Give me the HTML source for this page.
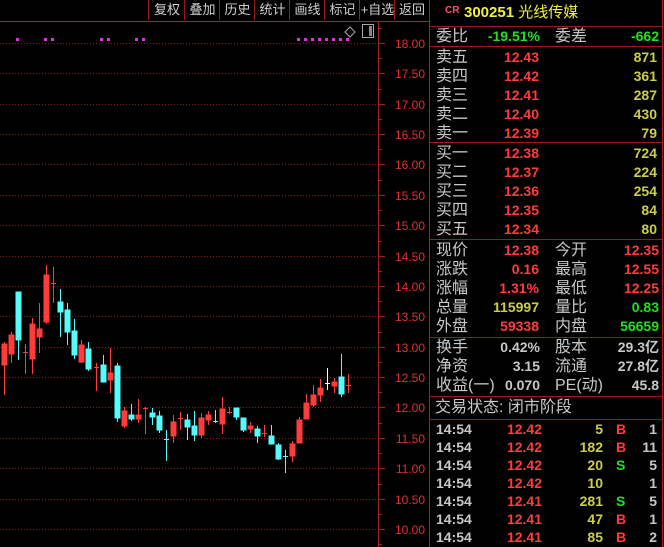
<!DOCTYPE html>
<html><head><meta charset="utf-8"><style>
*{margin:0;padding:0}
body{width:664px;height:547px;background:#000;overflow:hidden;position:relative;font-family:"Liberation Sans","Noto Sans CJK SC",sans-serif}
.t{position:absolute;font-size:14px;line-height:19px;white-space:nowrap}
.l{color:#c8c8c8;font-size:16px}.r{color:#ff3c3c}.y{color:#cccc50}.g{color:#20e020}.w{color:#c8c8c8}
.n{font-weight:bold;font-size:14px}
.hl{position:absolute;left:430px;width:232px;height:1px;background:#a01818}
.btn{position:absolute;top:0;height:20px;border-left:1px solid #a01818;color:#d0d0d0;font-size:13px;line-height:20px;text-align:center}
</style></head><body>
<svg width="664" height="547" style="position:absolute;left:0;top:0">
<line x1="0" y1="21.5" x2="429" y2="21.5" stroke="#b01c1c"/>
<line x1="378.5" y1="22" x2="378.5" y2="547" stroke="#b01c1c"/>
<line x1="429.5" y1="0" x2="429.5" y2="547" stroke="#b01c1c"/>
<line x1="662.5" y1="0" x2="662.5" y2="547" stroke="#b01c1c"/>
<g stroke="#8a1a1a" stroke-dasharray="1,2">
<line x1="0" y1="43.5" x2="378" y2="43.5"/><line x1="0" y1="73.5" x2="378" y2="73.5"/><line x1="0" y1="104.5" x2="378" y2="104.5"/><line x1="0" y1="134.5" x2="378" y2="134.5"/><line x1="0" y1="164.5" x2="378" y2="164.5"/><line x1="0" y1="195.5" x2="378" y2="195.5"/><line x1="0" y1="225.5" x2="378" y2="225.5"/><line x1="0" y1="256.5" x2="378" y2="256.5"/><line x1="0" y1="286.5" x2="378" y2="286.5"/><line x1="0" y1="316.5" x2="378" y2="316.5"/><line x1="0" y1="347.5" x2="378" y2="347.5"/><line x1="0" y1="377.5" x2="378" y2="377.5"/><line x1="0" y1="407.5" x2="378" y2="407.5"/><line x1="0" y1="438.5" x2="378" y2="438.5"/><line x1="0" y1="468.5" x2="378" y2="468.5"/><line x1="0" y1="499.5" x2="378" y2="499.5"/><line x1="0" y1="529.5" x2="378" y2="529.5"/>
</g>
<g stroke="#b01c1c">
<line x1="379" y1="43.5" x2="385" y2="43.5"/><line x1="379" y1="73.5" x2="385" y2="73.5"/><line x1="379" y1="104.5" x2="385" y2="104.5"/><line x1="379" y1="134.5" x2="385" y2="134.5"/><line x1="379" y1="164.5" x2="385" y2="164.5"/><line x1="379" y1="195.5" x2="385" y2="195.5"/><line x1="379" y1="225.5" x2="385" y2="225.5"/><line x1="379" y1="256.5" x2="385" y2="256.5"/><line x1="379" y1="286.5" x2="385" y2="286.5"/><line x1="379" y1="316.5" x2="385" y2="316.5"/><line x1="379" y1="347.5" x2="385" y2="347.5"/><line x1="379" y1="377.5" x2="385" y2="377.5"/><line x1="379" y1="407.5" x2="385" y2="407.5"/><line x1="379" y1="438.5" x2="385" y2="438.5"/><line x1="379" y1="468.5" x2="385" y2="468.5"/><line x1="379" y1="499.5" x2="385" y2="499.5"/><line x1="379" y1="529.5" x2="385" y2="529.5"/>
<line x1="379" y1="28.5" x2="382" y2="28.5"/><line x1="379" y1="58.5" x2="382" y2="58.5"/><line x1="379" y1="89.5" x2="382" y2="89.5"/><line x1="379" y1="119.5" x2="382" y2="119.5"/><line x1="379" y1="149.5" x2="382" y2="149.5"/><line x1="379" y1="180.5" x2="382" y2="180.5"/><line x1="379" y1="210.5" x2="382" y2="210.5"/><line x1="379" y1="241.5" x2="382" y2="241.5"/><line x1="379" y1="271.5" x2="382" y2="271.5"/><line x1="379" y1="301.5" x2="382" y2="301.5"/><line x1="379" y1="332.5" x2="382" y2="332.5"/><line x1="379" y1="362.5" x2="382" y2="362.5"/><line x1="379" y1="392.5" x2="382" y2="392.5"/><line x1="379" y1="423.5" x2="382" y2="423.5"/><line x1="379" y1="453.5" x2="382" y2="453.5"/><line x1="379" y1="484.5" x2="382" y2="484.5"/><line x1="379" y1="514.5" x2="382" y2="514.5"/><line x1="379" y1="544.5" x2="382" y2="544.5"/>
</g>
<g fill="#e03030" font-family="Liberation Sans" font-size="12" text-anchor="end">
<text x="425" y="48">18.00</text><text x="425" y="78">17.50</text><text x="425" y="109">17.00</text><text x="425" y="139">16.50</text><text x="425" y="169">16.00</text><text x="425" y="200">15.50</text><text x="425" y="230">15.00</text><text x="425" y="261">14.50</text><text x="425" y="291">14.00</text><text x="425" y="321">13.50</text><text x="425" y="352">13.00</text><text x="425" y="382">12.50</text><text x="425" y="412">12.00</text><text x="425" y="443">11.50</text><text x="425" y="473">11.00</text><text x="425" y="504">10.50</text><text x="425" y="534">10.00</text>
</g>
<g fill="#e030e0">
<rect x="16" y="38" width="3" height="3"/><rect x="44" y="38" width="3" height="3"/><rect x="51" y="38" width="3" height="3"/><rect x="100" y="38" width="3" height="3"/><rect x="107" y="38" width="3" height="3"/><rect x="135" y="38" width="3" height="3"/><rect x="142" y="38" width="3" height="3"/>
<rect x="297" y="38" width="3" height="3"/><rect x="304" y="38" width="3" height="3"/><rect x="311" y="38" width="3" height="3"/><rect x="318" y="38" width="3" height="3"/><rect x="325" y="38" width="3" height="3"/><rect x="332" y="38" width="3" height="3"/><rect x="339" y="38" width="3" height="3"/><rect x="346" y="38" width="3" height="3"/>
</g>
<path d="M350 27 L355 32 L350 37 L345 32 Z" fill="none" stroke="#aaa"/>
<rect x="362.5" y="24.5" width="11" height="13" fill="none" stroke="#aaa"/><rect x="369" y="26" width="3" height="10" fill="#888"/>
<g stroke="#ff3c3c" fill="#ff3c3c">
<line x1="4.5" y1="342" x2="4.5" y2="395"/><rect x="2" y="344" width="5" height="21"/>
<line x1="11.5" y1="332" x2="11.5" y2="363"/><rect x="9" y="335" width="5" height="19"/>
<line x1="25.5" y1="344" x2="25.5" y2="374"/><line x1="23" y1="352.5" x2="28" y2="352.5"/>
<line x1="32.5" y1="318" x2="32.5" y2="374"/><rect x="30" y="324" width="5" height="35"/>
<line x1="39.5" y1="303" x2="39.5" y2="353"/><rect x="37" y="329" width="5" height="8"/>
<line x1="46.5" y1="265" x2="46.5" y2="324"/><rect x="44" y="275" width="5" height="47"/>
<line x1="53.5" y1="267" x2="53.5" y2="303"/><line x1="51" y1="283.5" x2="56" y2="283.5"/>
<line x1="81.5" y1="340" x2="81.5" y2="363"/><rect x="79" y="345" width="5" height="17"/>
<line x1="96.5" y1="363" x2="96.5" y2="391"/><line x1="94" y1="367.5" x2="99" y2="367.5"/>
<line x1="110.5" y1="348" x2="110.5" y2="393"/><rect x="108" y="373" width="5" height="7"/>
<line x1="124.5" y1="407" x2="124.5" y2="428"/><rect x="122" y="411" width="5" height="15"/>
<line x1="138.5" y1="399" x2="138.5" y2="423"/><rect x="136" y="415" width="5" height="4"/>
<line x1="145.5" y1="407" x2="145.5" y2="434"/><line x1="143" y1="408.5" x2="148" y2="408.5"/>
<line x1="173.5" y1="415" x2="173.5" y2="443"/><rect x="171" y="422" width="5" height="14"/>
<line x1="180.5" y1="412" x2="180.5" y2="430"/><line x1="178" y1="418.5" x2="183" y2="418.5"/>
<line x1="201.5" y1="413" x2="201.5" y2="438"/><rect x="199" y="418" width="5" height="17"/>
<line x1="208.5" y1="411" x2="208.5" y2="425"/><rect x="206" y="415" width="5" height="5"/>
<line x1="222.5" y1="397" x2="222.5" y2="434"/><rect x="220" y="409" width="5" height="15"/>
<line x1="229.5" y1="407" x2="229.5" y2="414"/><line x1="227" y1="412.5" x2="232" y2="412.5"/>
<line x1="250.5" y1="422" x2="250.5" y2="433"/><rect x="248" y="426" width="5" height="3"/>
<line x1="264.5" y1="425" x2="264.5" y2="437"/><line x1="262" y1="433.5" x2="267" y2="433.5"/>
<line x1="292.5" y1="441" x2="292.5" y2="462"/><rect x="290" y="444" width="5" height="12"/>
<line x1="299.5" y1="417" x2="299.5" y2="443"/><rect x="297" y="420" width="5" height="23"/>
<line x1="306.5" y1="394" x2="306.5" y2="419"/><rect x="304" y="403" width="5" height="16"/>
<line x1="313.5" y1="385" x2="313.5" y2="407"/><rect x="311" y="395" width="5" height="10"/>
<line x1="320.5" y1="379" x2="320.5" y2="402"/><rect x="318" y="388" width="5" height="7"/>
<line x1="334.5" y1="378" x2="334.5" y2="393"/><rect x="332" y="382" width="5" height="4"/>
<line x1="348.5" y1="374" x2="348.5" y2="393"/><line x1="346" y1="385.5" x2="351" y2="385.5"/>
</g>
<g stroke="#54fcfc" fill="#54fcfc">
<line x1="18.5" y1="292" x2="18.5" y2="360"/><rect x="16" y="292" width="5" height="48"/>
<line x1="60.5" y1="289" x2="60.5" y2="337"/><rect x="58" y="302" width="5" height="10"/>
<line x1="67.5" y1="303" x2="67.5" y2="345"/><rect x="65" y="310" width="5" height="22"/>
<line x1="74.5" y1="319" x2="74.5" y2="359"/><rect x="72" y="331" width="5" height="24"/>
<line x1="88.5" y1="342" x2="88.5" y2="371"/><rect x="86" y="349" width="5" height="20"/>
<line x1="103.5" y1="355" x2="103.5" y2="382"/><rect x="101" y="365" width="5" height="17"/>
<line x1="117.5" y1="363" x2="117.5" y2="422"/><rect x="115" y="366" width="5" height="52"/>
<line x1="131.5" y1="404" x2="131.5" y2="421"/><rect x="129" y="415" width="5" height="4"/>
<line x1="152.5" y1="408" x2="152.5" y2="425"/><rect x="150" y="413" width="5" height="4"/>
<line x1="159.5" y1="411" x2="159.5" y2="433"/><rect x="157" y="416" width="5" height="14"/>
<line x1="166.5" y1="430" x2="166.5" y2="461"/><line x1="164" y1="439.5" x2="169" y2="439.5"/>
<line x1="187.5" y1="414" x2="187.5" y2="440"/><rect x="185" y="420" width="5" height="7"/>
<line x1="194.5" y1="411" x2="194.5" y2="441"/><rect x="192" y="426" width="5" height="9"/>
<line x1="215.5" y1="410" x2="215.5" y2="423"/><line x1="213" y1="421.5" x2="218" y2="421.5"/>
<line x1="236.5" y1="408" x2="236.5" y2="420"/><rect x="234" y="408" width="5" height="9"/>
<line x1="243.5" y1="418" x2="243.5" y2="432"/><rect x="241" y="418" width="5" height="12"/>
<line x1="257.5" y1="426" x2="257.5" y2="443"/><rect x="255" y="429" width="5" height="7"/>
<line x1="271.5" y1="425" x2="271.5" y2="444"/><rect x="269" y="436" width="5" height="8"/>
<line x1="278.5" y1="443" x2="278.5" y2="460"/><rect x="276" y="445" width="5" height="14"/>
<line x1="285.5" y1="450" x2="285.5" y2="473"/><line x1="283" y1="456.5" x2="288" y2="456.5"/>
<line x1="341.5" y1="354" x2="341.5" y2="397"/><rect x="339" y="377" width="5" height="17"/>
</g>
<g stroke="#fff"><line x1="327.5" y1="368" x2="327.5" y2="390"/><line x1="325" y1="383.5" x2="330" y2="383.5"/></g>
</svg>
<div class="btn" style="left:148px;width:36px">复权</div>
<div class="btn" style="left:184px;width:35px">叠加</div>
<div class="btn" style="left:219px;width:35px">历史</div>
<div class="btn" style="left:254px;width:35px">统计</div>
<div class="btn" style="left:289px;width:35px">画线</div>
<div class="btn" style="left:324px;width:35px">标记</div>
<div class="btn" style="left:359px;width:35px">+自选</div>
<div class="btn" style="left:394px;width:34px">返回</div>

<div class="hl" style="top:26px"></div>
<div class="hl" style="top:46px"></div>
<div class="hl" style="top:142px"></div>
<div class="hl" style="top:239px"></div>
<div class="hl" style="top:337px"></div>
<div class="hl" style="top:396px"></div>
<div class="hl" style="top:419px"></div>

<div class="t" style="left:445px;top:1px;font-size:10px;color:#ff5060;font-weight:bold">CR</div>
<div class="t" style="left:464px;top:3px;color:#f0f040;font-size:15px"><b>300251</b> 光线传媒</div>

<div class="t l" style="left:436px;top:27px">委比</div>
<div class="t g n" style="right:124px;top:27px">-19.51%</div>
<div class="t l" style="left:555px;top:27px">委差</div>
<div class="t g n" style="right:5px;top:27px">-662</div>

<div class="t l" style="left:436px;top:48px">卖五</div><div class="t r n" style="right:125px;top:48px">12.43</div><div class="t y n" style="right:7px;top:48px">871</div>
<div class="t l" style="left:436px;top:67px">卖四</div><div class="t r n" style="right:125px;top:67px">12.42</div><div class="t y n" style="right:7px;top:67px">361</div>
<div class="t l" style="left:436px;top:86px">卖三</div><div class="t r n" style="right:125px;top:86px">12.41</div><div class="t y n" style="right:7px;top:86px">287</div>
<div class="t l" style="left:436px;top:105px">卖二</div><div class="t r n" style="right:125px;top:105px">12.40</div><div class="t y n" style="right:7px;top:105px">430</div>
<div class="t l" style="left:436px;top:124px">卖一</div><div class="t r n" style="right:125px;top:124px">12.39</div><div class="t y n" style="right:7px;top:124px">79</div>

<div class="t l" style="left:436px;top:144px">买一</div><div class="t r n" style="right:125px;top:144px">12.38</div><div class="t y n" style="right:7px;top:144px">724</div>
<div class="t l" style="left:436px;top:163px">买二</div><div class="t r n" style="right:125px;top:163px">12.37</div><div class="t y n" style="right:7px;top:163px">224</div>
<div class="t l" style="left:436px;top:182px">买三</div><div class="t r n" style="right:125px;top:182px">12.36</div><div class="t y n" style="right:7px;top:182px">254</div>
<div class="t l" style="left:436px;top:201px">买四</div><div class="t r n" style="right:125px;top:201px">12.35</div><div class="t y n" style="right:7px;top:201px">84</div>
<div class="t l" style="left:436px;top:220px">买五</div><div class="t r n" style="right:125px;top:220px">12.34</div><div class="t y n" style="right:7px;top:220px">80</div>

<div class="t l" style="left:436px;top:241px">现价</div><div class="t r n" style="right:125px;top:241px">12.38</div><div class="t l" style="left:555px;top:241px">今开</div><div class="t r n" style="right:5px;top:241px">12.35</div>
<div class="t l" style="left:436px;top:260px">涨跌</div><div class="t r n" style="right:125px;top:260px">0.16</div><div class="t l" style="left:555px;top:260px">最高</div><div class="t r n" style="right:5px;top:260px">12.55</div>
<div class="t l" style="left:436px;top:279px">涨幅</div><div class="t r n" style="right:125px;top:279px">1.31%</div><div class="t l" style="left:555px;top:279px">最低</div><div class="t r n" style="right:5px;top:279px">12.25</div>
<div class="t l" style="left:436px;top:298px">总量</div><div class="t y n" style="right:125px;top:298px">115997</div><div class="t l" style="left:555px;top:298px">量比</div><div class="t g n" style="right:5px;top:298px">0.83</div>
<div class="t l" style="left:436px;top:317px">外盘</div><div class="t r n" style="right:125px;top:317px">59338</div><div class="t l" style="left:555px;top:317px">内盘</div><div class="t g n" style="right:5px;top:317px">56659</div>

<div class="t l" style="left:436px;top:338px">换手</div><div class="t w n" style="right:124px;top:338px">0.42%</div><div class="t l" style="left:555px;top:338px">股本</div><div class="t w n" style="right:5px;top:338px">29.3亿</div>
<div class="t l" style="left:436px;top:357px">净资</div><div class="t w n" style="right:124px;top:357px">3.15</div><div class="t l" style="left:555px;top:357px">流通</div><div class="t w n" style="right:5px;top:357px">27.8亿</div>
<div class="t l" style="left:436px;top:376px">收益(一)</div><div class="t w n" style="right:124px;top:376px">0.070</div><div class="t l" style="left:555px;top:376px">PE(动)</div><div class="t w n" style="right:5px;top:376px">45.8</div>

<div class="t l" style="left:435px;top:398px">交易状态: 闭市阶段</div>

<div class="t w n" style="left:436px;top:420px">14:54</div><div class="t r n" style="right:122px;top:420px">12.42</div><div class="t y n" style="right:61px;top:420px">5</div><div class="t r n" style="left:616px;top:420px">B</div><div class="t w n" style="right:7px;top:420px">1</div>
<div class="t w n" style="left:436px;top:438px">14:54</div><div class="t r n" style="right:122px;top:438px">12.42</div><div class="t y n" style="right:61px;top:438px">182</div><div class="t r n" style="left:616px;top:438px">B</div><div class="t w n" style="right:7px;top:438px">11</div>
<div class="t w n" style="left:436px;top:456px">14:54</div><div class="t r n" style="right:122px;top:456px">12.42</div><div class="t y n" style="right:61px;top:456px">20</div><div class="t g n" style="left:616px;top:456px">S</div><div class="t w n" style="right:7px;top:456px">5</div>
<div class="t w n" style="left:436px;top:474px">14:54</div><div class="t r n" style="right:122px;top:474px">12.42</div><div class="t y n" style="right:61px;top:474px">10</div><div class="t w n" style="right:7px;top:474px">1</div>
<div class="t w n" style="left:436px;top:492px">14:54</div><div class="t r n" style="right:122px;top:492px">12.41</div><div class="t y n" style="right:61px;top:492px">281</div><div class="t g n" style="left:616px;top:492px">S</div><div class="t w n" style="right:7px;top:492px">5</div>
<div class="t w n" style="left:436px;top:510px">14:54</div><div class="t r n" style="right:122px;top:510px">12.41</div><div class="t y n" style="right:61px;top:510px">47</div><div class="t r n" style="left:616px;top:510px">B</div><div class="t w n" style="right:7px;top:510px">1</div>
<div class="t w n" style="left:436px;top:528px">14:54</div><div class="t r n" style="right:122px;top:528px">12.41</div><div class="t y n" style="right:61px;top:528px">85</div><div class="t r n" style="left:616px;top:528px">B</div><div class="t w n" style="right:7px;top:528px">2</div>
</body></html>
